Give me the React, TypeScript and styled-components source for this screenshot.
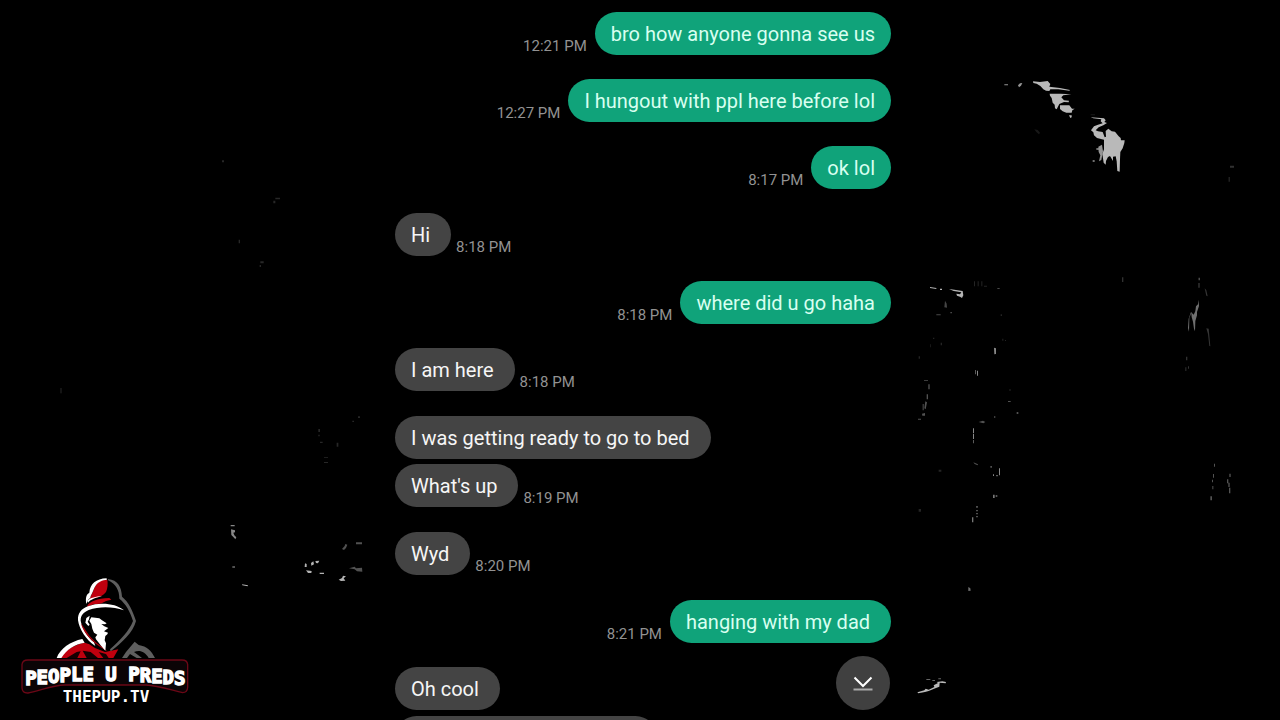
import React from "react";
import styled, { createGlobalStyle } from "styled-components";

const GlobalStyle = createGlobalStyle`
  *, *::before, *::after { box-sizing: border-box; }
  body { margin: 0; background: #000; font-family: Roboto, "Liberation Sans", sans-serif; }
`;

type Side = "sent" | "received";

interface MessageGroup {
  side: Side;
  time: string;
  texts: string[];
}

const groups: MessageGroup[] = [
  { side: "sent", time: "12:21 PM", texts: ["bro how anyone gonna see us"] },
  { side: "sent", time: "12:27 PM", texts: ["I hungout with ppl here before lol"] },
  { side: "sent", time: "8:17 PM", texts: ["ok lol"] },
  { side: "received", time: "8:18 PM", texts: ["Hi "] },
  { side: "sent", time: "8:18 PM", texts: ["where did u go haha"] },
  { side: "received", time: "8:18 PM", texts: ["I am here "] },
  { side: "received", time: "8:19 PM", texts: ["I was getting ready to go to bed ", "What's up "] },
  { side: "received", time: "8:20 PM", texts: ["Wyd "] },
  { side: "sent", time: "8:21 PM", texts: ["hanging with my dad "] },
  { side: "received", time: "", texts: ["Oh cool "] },
];

const Page = styled.div`
  position: relative;
  height: 100vh;
  overflow: hidden;
  background: #000;
`;

const Backdrop = styled.svg`
  position: absolute;
  inset: 0;
  width: 100%;
  height: 100%;
`;

const Chat = styled.main`
  position: relative;
  max-width: 560px;
  height: 100%;
  margin: 0 auto;
  padding: 12px 29px 0 35px;
  overflow: hidden;
`;

const Thread = styled.ol`
  display: flex;
  flex-direction: column;
  margin: 0;
  padding: 0;
  list-style: none;
`;

const Group = styled.li<{ $side: Side }>`
  display: flex;
  flex-direction: ${(p) => (p.$side === "sent" ? "row-reverse" : "row")};
  align-items: flex-end;
  gap: ${(p) => (p.$side === "sent" ? 8 : 5)}px;
  margin-bottom: ${(p) => (p.$side === "sent" ? 24 : 25)}px;

  &:last-child { margin-bottom: 6px; }
`;

const Stack = styled.div`
  display: flex;
  flex-direction: column;
  align-items: flex-start;
  gap: 5px;
`;

/* The last bubble of a group is laid beside its time, earlier ones above it. */
const LastLine = styled.div`
  display: flex;
  align-items: flex-end;
  gap: 5px;
`;

const Bubble = styled.p<{ $side: Side }>`
  margin: 0;
  padding: 10px 16px 9px;
  border-radius: 22px;
  font-size: 20px;
  line-height: 24px;
  white-space: pre-wrap;
  color: ${(p) => (p.$side === "sent" ? "#d8fff0" : "#f6f6f6")};
  background: ${(p) => (p.$side === "sent" ? "#10a37a" : "#444")};
`;

const Time = styled.time`
  font-size: 15px;
  line-height: 18px;
  white-space: nowrap;
  color: #929292;
`;

const NextBubble = styled.div`
  width: 262px;
  height: 43px;
  border-radius: 22px;
  background: #444;
`;

const ScrollButton = styled.button`
  position: absolute;
  right: 30px;
  bottom: 10px;
  display: grid;
  place-items: center;
  width: 54px;
  height: 54px;
  padding: 2px 0 0;
  border: 0;
  border-radius: 50%;
  background: #404040;
  cursor: pointer;
`;

const Brand = styled.svg`
  position: absolute;
  left: 10px;
  bottom: 10px;
  width: 190px;
  height: 140px;
`;

function Splatter() {
  return (
    <Backdrop viewBox="0 0 1280 720" preserveAspectRatio="xMidYMid slice" aria-hidden="true">
      <g transform="translate(990 70) scale(.33333)" fill="#b9b9b9">
        <path d="M129 34 L150 36 173 33 181 42 178 50 210 54 240 60 238 62 205 58 181 58 178 63 168 62 160 58 151 48 140 41 130 39Z" />
        <path d="M179 71 L211 71 244 73 220 76 214 82 222 91 237 92 236 97 222 96 208 102 203 112 200 118 195 115 194 104 188 98 185 84 180 77Z" />
        <path d="M210 106 L238 106 246 116 254 116 247 121 245 128 229 128 218 124 210 117Z M237 136 L245 136 245 142 241 144Z" />
        <path d="M84 46 L90 40 97 39 93 47 87 52Z M43 43h11v3H43Z" opacity=".8" />
        <path d="M302 142 L342 145 347 151 343 156 351 159 340 166 326 172 317 181 324 184 338 186 344 202 348 200 347 183 355 176 365 184 375 185 386 199 392 204 393 211 404 211 403 219 398 235 391 246 390 268 389 305 382 303 380 274 377 259 369 260 369 273 360 258 354 261 348 273 347 284 341 278 337 252 342 238 342 209 321 204 312 196 310 187 303 181 312 169 324 164 338 160 332 154 334 148 310 145Z" />
        <path d="M325 230 L336 224 339 244 334 270 327 274 331 256 326 246Z M319 235h7v4h-7Z M308 271h6v4h-6Z" opacity=".8" />
        <path d="M133 178 L143 180 150 188 147 193 139 186Z M302 133h13v3h-13Z" opacity=".13" />
      </g>

      <g transform="translate(900 270) scale(.33333)" fill="#b5b5b5">
        <path d="M90 51 L109 54 109 57 90 54Z M120 56h6v4h-6Z M147 57 L163 59 188 63 190 76 186 84 180 80 171 77 169 71 180 73 184 67 161 63Z" />
        <path d="M135 92 L140 101 141 113 133 112Z" opacity=".38" />
        <path d="M151 126h5v4h-5Z M109 133h13v3h-13Z M292 54h7v3h-7Z" opacity=".4" />
        <path d="M282 233 L288 235 288 252 283 253Z M226 300h2v13h-2Z M231 302h3v15h-3Z" opacity=".75" />
        <path d="M85 343h4v15h-4Z M80 373h4v15h-4Z M76 394 L81 397 77 418 73 415Z M68 402h3v19h-3Z M66 431 L75 429 75 437 67 437Z M54 446h9v3h-9Z M72 330h12v2H72Z" opacity=".45" />
        <path d="M219 475h3v14h-3Z M219 491h3v16h-3Z M220 510h2v10h-2Z M297 595h3v21h-3Z M279 613h3v5h-3Z M289 615h4v4h-4Z" opacity=".75" />
        <path d="M236 456 L249 452 256 456 250 460Z M282 439h4v4h-4Z M220 577 L234 583 233 586 224 582Z M271 588h5v5h-5Z M324 393h8v3h-8Z M350 426h5v6h-5Z" opacity=".45" />
        <path d="M279 674h5v10h-5Z M287 676h5v4h-5Z M229 708h4v5h-4Z M229 720h4v4h-4Z M229 729h4v4h-4Z M229 738h4v4h-4Z M216 742h4v15h-4Z" opacity=".65" />
        <path d="M90 223h2v9h-2Z M99 203h4v4h-4Z M122 218h4v8h-4Z M302 133h4v5h-4Z M307 206h3v6h-3Z M315 210h3v3h-3Z M56 259h4v7h-4Z M56 717h7v8h-7Z M222 34h3v15h-3Z M233 34h3v15h-3Z M244 34h3v15h-3Z M252 47h9v3h-9Z M116 599h8v6h-8Z M328 358h4v4h-4Z" opacity=".2" />
        <path d="M205 951 L211 955 212 962 205 963Z" opacity=".6" />
      </g>

      <g transform="translate(1100 150) scale(.33333)" fill="#8b8b8b">
        <path d="M296 383h3v8h-3Z M296 399h2v14h-2Z M296 449 L297 468 291 486 291 496 286 513 285 544 282 536 279 515 275 501 274 489 268 503 267 545 264 534 266 506 273 486 281 494 286 484 288 469 294 463Z" opacity=".8" />
        <path d="M314 415 L319 421 323 439 319 437Z M319 535 L326 536 331 589 328 588 324 552Z" opacity=".38" />
        <path d="M258 620h4v11h-4Z M256 652h3v11h-3Z M264 649h3v7h-3Z M66 382h4v14h-4Z M390 47h12v6h-12Z M386 81h3v14h-3Z" opacity=".35" />
        <path d="M342 941h3v9h-3Z M339 972h3v11h-3Z M336 989h3v8h-3Z M337 1008h3v10h-3Z M331 1039h5v12h-5Z M388 971h4v10h-4Z M381 988h4v12h-4Z M385 998h4v13h-4Z M387 1013h4v17h-4Z" opacity=".6" />
      </g>

      <g transform="translate(210 500) scale(.33333)" fill="#b3b3b3">
        <path d="M62 75h12v4H62Z M63 88 L75 91 75 97 70 98 73 106 79 112 76 118 70 111 64 105Z" opacity=".75" />
        <path d="M96 253 L114 256 113 259 97 256Z M285 190 L290 192 290 201 284 201Z M303 189 L310 184 312 193 304 197Z M316 183 L328 182 324 190 318 189Z M288 211 L305 213 304 219 294 219Z M329 218h13v4h-13Z M386 239 L396 234 399 227 408 229 401 235 406 242 393 243Z" />
        <path d="M396 147 L404 138 406 132 412 134 408 144 402 150Z M438 127h18v6h-18Z M417 205 L434 200 438 205 456 203 457 215 441 214 434 208Z M67 198h8v6h-8Z" opacity=".45" />
      </g>

      <g transform="translate(820 640) scale(.33333)" fill="#b9b9b9">
        <path d="M292 157 L313 151 317 146 326 149 343 141 341 136 354 129 350 126 367 124 378 126 377 130 359 128 358 140 346 145 326 153 315 156 295 160Z" />
        <path d="M319 117h12v3h-12Z M337 120h8v3h-8Z M355 115h8v3h-8Z" opacity=".55" />
      </g>

      <g transform="translate(210 140) scale(.33333)" fill="#666">
        <path d="M196 173h14v5h-14Z M190 182h6v8h-6Z M36 61h6v6h-6Z M86 299h4v11h-4Z M151 364h10v6h-10Z M149 375h4v6h-4Z M325 867h5v9h-5Z M380 908h5v12h-5Z M325 884h4v5h-4Z M330 905h8v4h-8Z M342 951h12v2h-12Z M342 966h12v3h-12Z M444 829h6v5h-6Z M427 842h5v4h-5Z" opacity=".38" />
        <path d="M-450 744h6v16h-6Z" opacity=".2" />
      </g>
    </Backdrop>
  );
}

function BrandMark() {
  return (
    <Brand viewBox="0 0 570 420" role="img" aria-label="People U Preds, thepup.tv">
      <g transform="translate(120 6)">
        {/* shoulders */}
        <path d="M24 258 C38 245 66 218 104 212 L118 217 135 228 165 240 205 232 190 258Z" fill="#c0000e" />
        <path d="M50 258 L80 240 92 238 82 258Z M110 258 L98 236 122 240 144 258Z M160 258 L146 240 168 246 176 258Z" fill="#150002" />
        <path d="M20 258 C30 230 62 208 97 201 L104 212 C74 216 50 232 34 258Z" fill="#fff" />
        <path d="M216 258 L228 240 254 209 266 219 C291 223 304 236 315 258 L296 258 C285 238 268 233 252 240 L276 258 260 258 240 246 231 258Z" fill="#5e5e5e" />
        {/* crown of the hood */}
        <path d="M168 22 C150 24 138 34 132 50 C130 60 121 72 118 84 L134 79 C150 75 160 70 168 60 C173 50 174 34 172 24Z" fill="#c0000e" />
        <path d="M112 101 C120 88 140 80 178 78 L184 83 C164 86 158 94 150 95 C136 95 122 98 110 106Z" fill="#c0000e" />
        <path d="M170 19 C138 20 120 36 118 62 C106 68 107 84 109 96 L114 84 C118 80 122 78 122 72 C132 56 132 38 150 29 C158 25 165 24 170 24Z" fill="#fff" />
        <path d="M112 86 C120 78 138 73 156 73 C140 76 122 82 114 92Z" fill="#fff" />
        {/* rim around the face */}
        <path d="M222 115 C196 94 150 90 114 103 C94 111 83 122 84 145 C88 172 108 204 136 222 L132 211 C112 194 96 168 92 146 C92 130 100 121 116 114 C150 102 190 104 222 115Z" fill="#fff" />
        <path d="M93 154 C98 176 118 208 172 238 L165 230 C140 214 124 200 112 182Z" fill="#a8000c" />
        <path d="M174 21 C204 24 214 44 216 74 C236 90 248 116 258 147 C250 180 216 212 182 238 L180 232 C210 206 238 176 249 147 C240 118 228 96 208 80 C208 56 198 36 174 25Z" fill="#5e5e5e" />
        {/* face */}
        <path d="M119 131 L109 138 106 152 115 162 119 158 113 149 117 142Z" fill="#fff" />
        <path d="M124 136 L148 139 156 145 170 154 165 157 154 156 163 163 175 168 168 173 162 178 174 182 172 187 166 192 164 205 168 214 166 236 152 220 138 202 136 196 142 188 132 182 127 170 124 156 118 146Z" fill="#fff" />
      </g>
      {/* name plate */}
      <path
        d="M54 270 H516 Q532 270 533 284 V352 Q532 368 518 368 C470 356 440 346 408 345 H164 C128 346 99 359 54 369 Q37 370 36 354 V284 Q37 270 54 270Z"
        fill="#0b0406"
        stroke="#6b0716"
        strokeWidth="4"
      />
      <text
        x="286"
        y="344"
        dy="0 -3 -3 -3 -2 -1 0 0 0 1 2 3 3 3"
        textAnchor="middle"
        fill="#fff"
        stroke="#fff"
        strokeWidth="4"
        fontFamily="'DejaVu Sans Mono', monospace"
        fontWeight="700"
        fontSize="57"
      >
        PEOPLE U PREDS
      </text>
      <text
        x="288"
        y="395"
        textAnchor="middle"
        fill="#fff"
        fontFamily="'DejaVu Sans Mono', monospace"
        fontWeight="700"
        fontSize="48"
      >
        THEPUP.TV
      </text>
    </Brand>
  );
}

function MessageItem({ group }: { group: MessageGroup }) {
  const earlier = group.texts.slice(0, -1);
  const last = group.texts[group.texts.length - 1];
  if (group.side === "sent") {
    return (
      <Group $side="sent">
        <Bubble $side="sent">{last}</Bubble>
        <Time>{group.time}</Time>
      </Group>
    );
  }
  return (
    <Group $side="received">
      <Stack>
        {earlier.map((text) => (
          <Bubble key={text} $side="received">{text}</Bubble>
        ))}
        <LastLine>
          <Bubble $side="received">{last}</Bubble>
          {group.time && <Time>{group.time}</Time>}
        </LastLine>
      </Stack>
    </Group>
  );
}

export default function App() {
  return (
    <Page>
      <GlobalStyle />
      <Splatter />
      <Chat>
        <Thread>
          {groups.map((group) => (
            <MessageItem key={group.texts[0]} group={group} />
          ))}
        </Thread>
        <NextBubble />
        <ScrollButton type="button" aria-label="Scroll to latest">
          <svg width="20" height="16" viewBox="0 0 20 16" fill="none" aria-hidden="true">
            <path d="M1.5 1.5 L10 10 18.5 1.5" stroke="#fff" strokeWidth="2" />
            <path d="M.5 13.5 H19.5" stroke="#aaa" strokeWidth="2" />
          </svg>
        </ScrollButton>
      </Chat>
      <BrandMark />
    </Page>
  );
}
